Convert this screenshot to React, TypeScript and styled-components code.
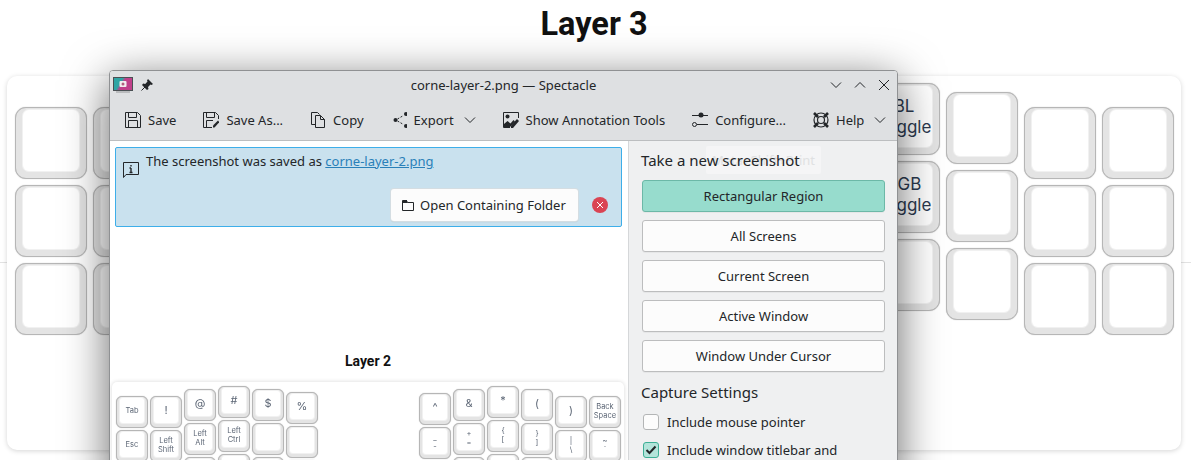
import React from 'react';
import styled, { createGlobalStyle } from 'styled-components';

const GlobalStyle = createGlobalStyle`
    html, body {
        margin: 0;
        padding: 0;
        background: #fff;
    }
`;

const Page = styled.div`
    position: relative;
    width: 1191px;
    height: 460px;
    overflow: hidden;
    background: #fff;

    &::before {
        content: '';
        position: absolute;
        left: 0;
        right: 0;
        top: 262px;
        height: 1px;
        background: #e2e2e2;
    }
`;

const PageTitle = styled.h1`
    position: relative;
    margin: 0;
    height: 76px;
    padding: 6px 3px 0 0;
    box-sizing: border-box;
    text-align: center;
    font: 700 32.5px/36px Roboto, sans-serif;
    color: #111;
`;

const Board = styled.div<{ $small?: boolean }>`
    position: relative;
    display: flex;
    justify-content: space-between;
    box-sizing: border-box;
    background: #fff;
    border-radius: ${p => (p.$small ? '5px' : '10px')};
    width: ${p => (p.$small ? '512px' : '1174px')};
    height: ${p => (p.$small ? '120px' : '374px')};
    margin-left: ${p => (p.$small ? '2px' : '7px')};
    padding: ${p => (p.$small ? '0 3px 0 4px' : '0 7px 0 8px')};
    box-shadow: ${p => (p.$small ? '0 0 4px rgba(0, 0, 0, 0.16)' : '0 1px 5px rgba(0, 0, 0, 0.17)')};
    ${p => p.$small && 'filter: blur(0.35px);'}
`;

const Half = styled.div<{ $small?: boolean }>`
    display: flex;
    gap: ${p => (p.$small ? '2px' : '6px')};
`;

const Column = styled.div<{ $small?: boolean; $offset: number }>`
    display: flex;
    flex-direction: column;
    gap: ${p => (p.$small ? '2px' : '6px')};
    margin-top: ${p => p.$offset}px;
`;

const Keycap = styled.div<{ $small?: boolean }>`
    box-sizing: border-box;
    width: ${p => (p.$small ? '32px' : '72px')};
    height: ${p => (p.$small ? '32px' : '72px')};
    padding: ${p => (p.$small ? '1px 3px 4px' : '2px 7px 7px')};
    border: 1px solid #b6b6b6;
    border-radius: ${p => (p.$small ? '6px' : '11px')};
    background: #e4e4e4;
    box-shadow: 0 0 1px rgba(0, 0, 0, 0.3);
`;

const KeyFace = styled.div<{ $small?: boolean; $symbol?: boolean }>`
    display: flex;
    align-items: center;
    justify-content: center;
    height: 100%;
    text-align: center;
    white-space: pre-line;
    background: #fff;
    border-radius: ${p => (p.$small ? '3px' : '6px')};
    box-shadow: 0 0 0 1px #f1f1f1;
    font-family: Inter, sans-serif;
    color: ${p => (p.$small ? '#5c6675' : '#2c3a50')};
    font-size: ${p => (p.$small ? (p.$symbol ? '11px' : '7.5px') : '17px')};
    line-height: ${p => (p.$small ? '9px' : '21px')};
`;

const Window = styled.div`
    position: absolute;
    left: 109px;
    top: 70px;
    width: 789px;
    height: 420px;
    box-sizing: border-box;
    display: flex;
    flex-direction: column;
    background: #fff;
    border: 1px solid #8f9193;
    border-radius: 4px 4px 0 0;
    box-shadow: 0 10px 45px rgba(0, 0, 0, 0.6);
    font: 13px/16px 'Noto Sans', sans-serif;
    color: #232629;
`;

const TitleBar = styled.div`
    display: grid;
    grid-template-columns: 1fr auto 1fr;
    align-items: center;
    box-sizing: border-box;
    height: 29px;
    padding: 0 3px 1px;
    background: #dee0e2;
    border-radius: 3px 3px 0 0;
`;

const TitleLeft = styled.div`
    display: flex;
    align-items: center;
    gap: 8px;
`;

const TitleButtons = styled.div`
    display: flex;
    justify-content: flex-end;
    gap: 12px;
    padding-right: 4px;
`;

const Toolbar = styled.div`
    display: flex;
    align-items: center;
    gap: 27px;
    height: 40px;
    padding-left: 15px;
    background: #dee0e2;
    border-bottom: 1px solid #bcbec0;
    box-sizing: content-box;
`;

const ToolButton = styled.div`
    display: flex;
    align-items: center;
    gap: 7px;
    white-space: nowrap;
`;

const Chevron = styled.span`
    display: flex;
    margin-left: 3px;
`;

const Main = styled.div`
    flex: 1;
    display: flex;
    min-height: 0;
`;

const Preview = styled.div`
    width: 518px;
    flex: none;
    background: #fff;
    border-right: 1px solid #d5d7d9;
`;

const Message = styled.div`
    box-sizing: border-box;
    height: 80px;
    margin: 6px 6px 0 5px;
    padding: 5px 13px 0 7px;
    background: #c9e1ee;
    border: 1px solid #3daee9;
    border-radius: 2px;
    display: flex;
    flex-direction: column;
`;

const MessageRow = styled.div`
    display: flex;
    gap: 7px;
`;

const MessageIcon = styled.span`
    display: flex;
    margin-top: 9px;
`;

const MessageLink = styled.a`
    color: #2980b9;
    text-decoration: underline;
`;

const MessageActions = styled.div`
    display: flex;
    align-items: center;
    justify-content: flex-end;
    gap: 14px;
    margin-top: 11px;
`;

const FolderButton = styled.div`
    display: flex;
    align-items: center;
    gap: 6px;
    box-sizing: border-box;
    width: 187px;
    height: 32px;
    padding-left: 11px;
    background: #fcfcfc;
    border-radius: 3px;
    box-shadow: 0 0 0 1px #d4dde2, 0 1px 1px rgba(0, 0, 0, 0.2);
`;

const ShotTitle = styled.div`
    margin: 126px 2px 13px 0;
    text-align: center;
    font: 700 14px/16px Roboto, sans-serif;
    color: #111;
`;

const Side = styled.div`
    position: relative;
    flex: 1;
    box-sizing: border-box;
    padding: 9px 12px 0;
    background: #eff0f1;
`;

const Tip = styled.div`
    position: absolute;
    left: 77px;
    top: 5px;
    width: 115px;
    height: 28px;
    text-align: center;
    line-height: 28px;
    border-radius: 2px;
    background: #f5f5f6;
    color: #e0e1e2;
`;

const SideHeading = styled.div<{ $gap?: number }>`
    position: relative;
    margin-top: ${p => p.$gap ?? 0}px;
    font-size: 15px;
    line-height: 20px;
    color: #232629;
`;

const ModeList = styled.div`
    display: flex;
    flex-direction: column;
    gap: 8px;
    margin: 10px 0 0 1px;
`;

const ModeButton = styled.div<{ $active?: boolean }>`
    box-sizing: border-box;
    height: 32px;
    line-height: 30px;
    text-align: center;
    border-radius: 3px;
    border: 1px solid ${p => (p.$active ? '#6cb8a7' : '#bcbdbe')};
    background: ${p => (p.$active ? '#97dccd' : '#fcfcfc')};
    box-shadow: 0 1px 0 rgba(0, 0, 0, 0.04);
`;

const OptionList = styled.div`
    display: flex;
    flex-direction: column;
    gap: 12px;
    margin: 12px 0 0 2px;
`;

const Option = styled.div`
    display: flex;
    align-items: center;
    gap: 8px;
    height: 16px;
    white-space: nowrap;
`;

const CheckBox = styled.span<{ $checked?: boolean }>`
    display: flex;
    align-items: center;
    justify-content: center;
    box-sizing: border-box;
    width: 16px;
    height: 16px;
    border-radius: 3px;
    border: 1px solid ${p => (p.$checked ? '#3daf96' : '#b3b5b6')};
    background: ${p => (p.$checked ? '#b3e4da' : '#fcfcfc')};
`;

const CloseBadge = styled.span`
    display: flex;
    align-items: center;
    justify-content: center;
    width: 16px;
    height: 16px;
    border-radius: 50%;
    background: #da4453;
`;

type IconProps = { children: React.ReactNode; size?: number };

const Glyph = ({ children, size = 16 }: IconProps) => (
    <svg width={size} height={size} viewBox={`0 0 ${size} ${size}`} fill="none" stroke="#232629" strokeWidth="1">
        {children}
    </svg>
);

const SaveIcon = () => (
    <Glyph>
        <path d="M.5.5h12l3 3v12H.5z" />
        <path d="M3.5.5v5h8v-5M3.5 15.5v-7h9v7" />
    </Glyph>
);

const SaveAsIcon = () => (
    <Glyph>
        <path d="M9 15.5H.5V.5h12l3 3V7" />
        <path d="M3.5.5v5h8v-5M3.5 15.5v-7H10" />
        <path d="M10 15.5v-2l5-5 1.5 1.5-5 5.5z" fill="#232629" stroke="none" />
    </Glyph>
);

const CopyIcon = () => (
    <Glyph>
        <path d="M5.5 12.5h-4V.5h6l2 2" />
        <path d="M5.5 3.5h5l4 4v8h-9z" />
        <path d="M10.500 3.500v4h4" />
    </Glyph>
);

const ExportIcon = () => (
    <Glyph>
        <circle cx="4.500" cy="8" r="2" fill="#232629" stroke="none" />
        <circle cx="15" cy="2" r="2" fill="#232629" stroke="none" />
        <circle cx="15" cy="14" r="2" fill="#232629" stroke="none" />
        <path d="M6.500 7l6-3.500M6.500 9l6 3.500" strokeDasharray="2 1.5" />
    </Glyph>
);

const AnnotateIcon = () => (
    <Glyph>
        <path d="M15.5 6V.5H.5v15H7" />
        <circle cx="4.5" cy="4.5" r="2" fill="#232629" stroke="none" />
        <path d="M1 15v-3l3.5-3 3 2.5 3-3.5 1.5 1.5L7 15z" fill="#232629" stroke="none" />
        <path d="M8 16v-2.5l6-6.5 2 2-6 7z" fill="#232629" stroke="none" />
    </Glyph>
);

const ConfigureIcon = () => (
    <Glyph>
        <path d="M0 3.5h16M5 12.500h11" />
        <circle cx="9" cy="3" r="2.5" fill="#232629" stroke="none" />
        <circle cx="2.500" cy="12.500" r="2" />
    </Glyph>
);

const HelpIcon = () => (
    <Glyph>
        <circle cx="8" cy="8" r="7" strokeWidth="1.2" />
        <circle cx="8" cy="8" r="3.5" strokeWidth="1.2" />
        <path d="M1 1l4 4M15 1l-4 4M1 15l4-4M15 15l-4-4" strokeWidth="2.6" />
    </Glyph>
);

const InfoIcon = () => (
    <Glyph>
        <path d="M.5.5h15v12H3l-2.5 3z" />
        <path d="M8 3v1.5M8 6v4.5M6.5 6H8M6.5 10.5h3" strokeWidth="1.4" />
    </Glyph>
);

const FolderIcon = () => (
    <Glyph size={12}>
        <path d="M.5 1.5h4l1 2h6v8H.5z" />
        <path d="M.5 3.5h5" />
        <path d="M1 1h4v2.5H1z" fill="#232629" stroke="none" />
    </Glyph>
);

const ChevronIcon = ({ up }: { up?: boolean }) => (
    <Glyph size={12}>
        <path d={up ? 'M1 8.5l5-5 5 5' : 'M1 3.5l5 5 5-5'} />
    </Glyph>
);

const ExitIcon = () => (
    <Glyph size={12}>
        <path d="M1 1l10 10M11 1L1 11" />
    </Glyph>
);

const PinIcon = () => (
    <Glyph size={12}>
        <path d="M7 0l5 5-1.5 1-1-.5L7 8l.5 2L6 11 1 6l1.2-1.5 2 .5L6.5 2.500 6 1.500z" fill="#232629" stroke="none" />
        <path d="M4 8L.5 11.500" />
    </Glyph>
);

const AppIcon = () => (
    <svg width="20" height="17" viewBox="0 0 20 17">
        <defs>
            <linearGradient id="screen" x1="0" y1="0" x2="1" y2="0.4">
                <stop offset="0.42" stopColor="#2fa5a5" />
                <stop offset="0.58" stopColor="#c0408a" />
            </linearGradient>
        </defs>
        <rect x="0" y="0" width="20" height="14" fill="#4a5054" />
        <rect x="1" y="1" width="18" height="12" fill="url(#screen)" />
        <rect x="6.500" y="4" width="7" height="6" rx="1" fill="#f3eef0" />
        <circle cx="10" cy="7" r="1.500" fill="#b0607f" />
        <rect x="3" y="14" width="14" height="2" fill="#b9bbbd" />
    </svg>
);

const CheckMark = () => (
    <svg width="12" height="12" viewBox="0 0 12 12" fill="none">
        <path d="M1.500 6l3 3 6-6.500" stroke="#232629" strokeWidth="2" />
    </svg>
);

type ColumnData = { offset: number; keys: string[] };

const blank = ['', '', ''];

const mainLeft: ColumnData[] = [
    { offset: 31, keys: blank },
    { offset: 31, keys: blank },
    { offset: 16, keys: blank },
    { offset: 7, keys: blank },
    { offset: 16, keys: blank },
    { offset: 19, keys: blank },
];

const mainRight: ColumnData[] = [
    { offset: 31, keys: blank },
    { offset: 16, keys: blank },
    { offset: 7, keys: ['BL\nToggle', 'RGB\nToggle', ''] },
    { offset: 16, keys: blank },
    { offset: 31, keys: blank },
    { offset: 31, keys: blank },
];

const shotLeft: ColumnData[] = [
    { offset: 14, keys: ['Tab', 'Esc', ''] },
    { offset: 14, keys: ['!', 'Left\nShift', ''] },
    { offset: 7, keys: ['@', 'Left\nAlt', ''] },
    { offset: 4, keys: ['#', 'Left\nCtrl', ''] },
    { offset: 7, keys: ['$', '', ''] },
    { offset: 10, keys: ['%', '', ''] },
];

const shotRight: ColumnData[] = [
    { offset: 11, keys: ['^', '_\n-', ''] },
    { offset: 7, keys: ['&', '+\n=', ''] },
    { offset: 4, keys: ['*', '{\n[', ''] },
    { offset: 7, keys: ['(', '}\n]', ''] },
    { offset: 14, keys: [')', '|\n\\', ''] },
    { offset: 14, keys: ['Back\nSpace', '~\n`', ''] },
];

const KeyHalf = ({ columns, small }: { columns: ColumnData[]; small?: boolean }) => (
    <Half $small={small}>
        {columns.map((col, i) => (
            <Column key={i} $small={small} $offset={col.offset}>
                {col.keys.map((label, j) => (
                    <Keycap key={j} $small={small}>
                        <KeyFace $small={small} $symbol={label.length === 1}>{label}</KeyFace>
                    </Keycap>
                ))}
            </Column>
        ))}
    </Half>
);

const modes = ['All Screens', 'Current Screen', 'Active Window', 'Window Under Cursor'];

const App = (): JSX.Element => (
    <Page>
        <GlobalStyle />
        <PageTitle>Layer 3</PageTitle>
        <Board>
            <KeyHalf columns={mainLeft} />
            <KeyHalf columns={mainRight} />
        </Board>
        <Window>
            <TitleBar>
                <TitleLeft>
                    <AppIcon />
                    <PinIcon />
                </TitleLeft>
                <div>corne-layer-2.png — Spectacle</div>
                <TitleButtons>
                    <ChevronIcon />
                    <ChevronIcon up />
                    <ExitIcon />
                </TitleButtons>
            </TitleBar>
            <Toolbar>
                <ToolButton><SaveIcon />Save</ToolButton>
                <ToolButton><SaveAsIcon />Save As...</ToolButton>
                <ToolButton><CopyIcon />Copy</ToolButton>
                <ToolButton><ExportIcon />Export<Chevron><ChevronIcon /></Chevron></ToolButton>
                <ToolButton><AnnotateIcon />Show Annotation Tools</ToolButton>
                <ToolButton><ConfigureIcon />Configure...</ToolButton>
                <ToolButton><HelpIcon />Help<Chevron><ChevronIcon /></Chevron></ToolButton>
            </Toolbar>
            <Main>
                <Preview>
                    <Message>
                        <MessageRow>
                            <MessageIcon><InfoIcon /></MessageIcon>
                            <div>
                                The screenshot was saved as <MessageLink>corne-layer-2.png</MessageLink>
                            </div>
                        </MessageRow>
                        <MessageActions>
                            <FolderButton><FolderIcon />Open Containing Folder</FolderButton>
                            <CloseBadge>
                                <svg width="8" height="8" viewBox="0 0 8 8" fill="none">
                                    <path d="M1 1l6 6M7 1L1 7" stroke="#fff" strokeWidth="1" />
                                </svg>
                            </CloseBadge>
                        </MessageActions>
                    </Message>
                    <ShotTitle>Layer 2</ShotTitle>
                    <Board $small>
                        <KeyHalf columns={shotLeft} small />
                        <KeyHalf columns={shotRight} small />
                    </Board>
                </Preview>
                <Side>
                    <Tip>Meta+Shift+Print</Tip>
                    <SideHeading>Take a new screenshot</SideHeading>
                    <ModeList>
                        <ModeButton $active>Rectangular Region</ModeButton>
                        {modes.map(mode => <ModeButton key={mode}>{mode}</ModeButton>)}
                    </ModeList>
                    <SideHeading $gap={10}>Capture Settings</SideHeading>
                    <OptionList>
                        <Option><CheckBox />Include mouse pointer</Option>
                        <Option><CheckBox $checked><CheckMark /></CheckBox>Include window titlebar and</Option>
                    </OptionList>
                </Side>
            </Main>
        </Window>
    </Page>
);

export default App;
